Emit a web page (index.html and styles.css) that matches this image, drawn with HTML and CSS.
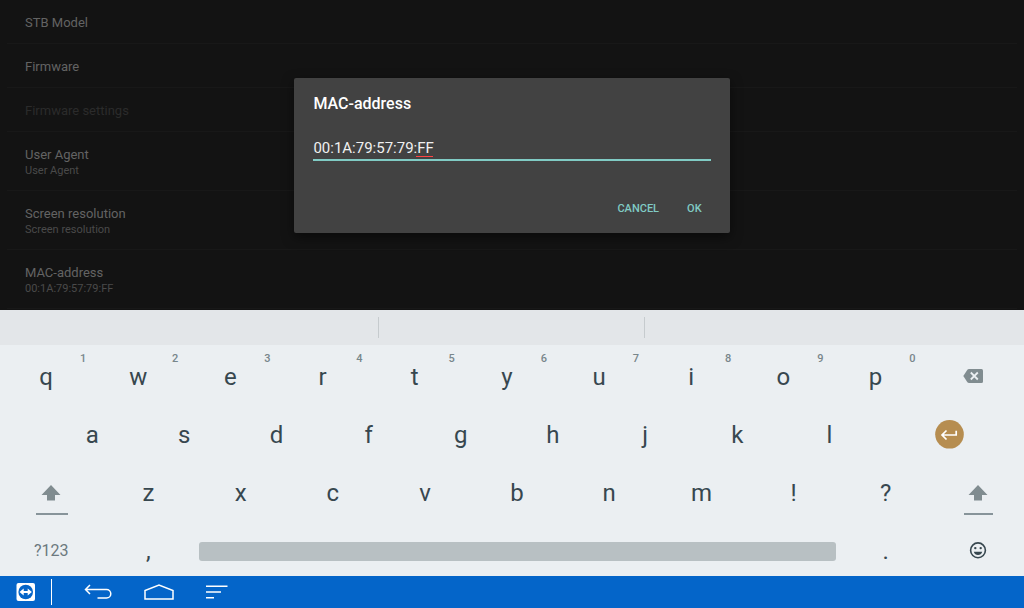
FILE: index.html
```html
<!DOCTYPE html>
<html lang="en">
<head>
  <meta charset="UTF-8">
  <meta name="viewport" content="width=device-width, initial-scale=1.0">
  <title>MAC-address</title>
  <link rel="stylesheet" href="styles.css">
</head>
<body>
  <main class="settings">
    <ul class="settings-list">
      <li><span class="name">STB Model</span></li>
      <li><span class="name">Firmware</span></li>
      <li class="disabled"><span class="name">Firmware settings</span></li>
      <li><span class="name">User Agent</span><span class="value">User Agent</span></li>
      <li><span class="name">Screen resolution</span><span class="value">Screen resolution</span></li>
      <li><span class="name">MAC-address</span><span class="value">00:1A:79:57:79:FF</span></li>
    </ul>

    <div class="overlay">
      <form class="dialog" role="dialog" aria-labelledby="macLabel">
        <label id="macLabel" for="mac">MAC-address</label>
        <div class="field">
          <input id="mac" type="text" value="00:1A:79:57:79:FF" spellcheck="false" autocomplete="off">
          <span class="typo"></span>
        </div>
        <div class="actions">
          <button type="button">CANCEL</button>
          <button type="button">OK</button>
        </div>
      </form>
    </div>
  </main>

  <div class="suggestions">
    <span></span>
    <span></span>
    <span></span>
  </div>

  <section class="keyboard" aria-label="Keyboard">
    <div class="row">
      <button class="key">q<sup>1</sup></button>
      <button class="key">w<sup>2</sup></button>
      <button class="key">e<sup>3</sup></button>
      <button class="key">r<sup>4</sup></button>
      <button class="key">t<sup>5</sup></button>
      <button class="key">y<sup>6</sup></button>
      <button class="key">u<sup>7</sup></button>
      <button class="key">i<sup>8</sup></button>
      <button class="key">o<sup>9</sup></button>
      <button class="key">p<sup>0</sup></button>
      <button class="key rest" aria-label="Backspace">
        <svg width="20" height="18" viewBox="0 0 20 18">
          <path d="M6 1h12.500q1.500 0 1.500 1.500v11q0 1.500-1.500 1.500H6q-1 0-1.600-.8L.3 8l4.100-6.200Q5 1 6 1z" fill="#808c90"/>
          <path d="M7.800 4.500l7 7M14.800 4.500l-7 7" stroke="#ebeff2" stroke-width="1.800"/>
        </svg>
      </button>
    </div>

    <div class="row indent">
      <button class="key">a</button>
      <button class="key">s</button>
      <button class="key">d</button>
      <button class="key">f</button>
      <button class="key">g</button>
      <button class="key">h</button>
      <button class="key">j</button>
      <button class="key">k</button>
      <button class="key">l</button>
      <button class="key rest" aria-label="Enter">
        <svg width="30" height="30" viewBox="0 0 30 30">
          <circle cx="14.500" cy="14.300" r="14.300" fill="#b68d50"/>
          <path d="M21.200 10.800v4.200H7.500M11.500 10.500l-4.500 4.500 4.500 4.500" fill="none" stroke="#fff" stroke-width="1.700"/>
        </svg>
      </button>
    </div>

    <div class="row">
      <button class="key wide shift" aria-label="Shift">
        <svg width="20" height="16" viewBox="0 0 20 16">
          <path d="M10 0l9.500 10H14v5.500H6V10H.5z" fill="#808c90"/>
        </svg>
      </button>
      <button class="key">z</button>
      <button class="key">x</button>
      <button class="key">c</button>
      <button class="key">v</button>
      <button class="key">b</button>
      <button class="key">n</button>
      <button class="key">m</button>
      <button class="key">!</button>
      <button class="key">?</button>
      <button class="key rest shift" aria-label="Shift">
        <svg width="20" height="16" viewBox="0 0 20 16">
          <path d="M10 0l9.500 10H14v5.500H6V10H.5z" fill="#808c90"/>
        </svg>
      </button>
    </div>

    <div class="row last">
      <button class="key wide symbols">?123</button>
      <button class="key">,</button>
      <button class="key space" aria-label="Space"></button>
      <button class="key">.</button>
      <button class="key rest" aria-label="Emoji">
        <svg width="18" height="20" viewBox="0 0 18 20">
          <circle cx="9" cy="9.300" r="7.400" fill="none" stroke="#37474f" stroke-width="1.600"/>
          <circle cx="6.300" cy="7.100" r="1.200" fill="#37474f"/>
          <circle cx="11.700" cy="7.100" r="1.200" fill="#37474f"/>
          <path d="M4.800 10.700h8.400Q12.200 14 9 14T4.800 10.700z" fill="#37474f"/>
        </svg>
      </button>
    </div>
  </section>

  <nav class="navbar">
    <button class="viewer" aria-label="Remote control">
      <svg width="20" height="20" viewBox="0 0 20 20">
        <rect x=".5" y="1" width="18.500" height="18" rx="2" fill="#fff"/>
        <circle cx="9.700" cy="10" r="7.300" fill="#0465c9"/>
        <path d="M3.500 10l4.200-3.400v2.300h4V6.600l4.200 3.400-4.200 3.400v-2.300h-4v2.300z" fill="#fff"/>
      </svg>
    </button>
    <button aria-label="Back">
      <svg width="28" height="16" viewBox="0 0 28 16">
        <path d="M6 1L1.500 5.500 6 10M1.500 5.500h21a4.300 4.300 0 0 1 0 8.600h-9" fill="none" stroke="#fff" stroke-width="1.500"/>
      </svg>
    </button>
    <button aria-label="Home">
      <svg width="30" height="16" viewBox="0 0 30 16">
        <path d="M1 15V6.500L15 1l14 5.500V15z" fill="none" stroke="#fff" stroke-width="1.500"/>
      </svg>
    </button>
    <button aria-label="Recent apps">
      <svg width="22" height="14" viewBox="0 0 22 14">
        <path d="M0 1.200h21.500M0 7h15M0 12.800h8" fill="none" stroke="#fff" stroke-width="1.600"/>
      </svg>
    </button>
  </nav>
</body>
</html>
```
FILE: styles.css
```css
* {
  box-sizing: border-box;
}

html, body {
  height: 100%;
  margin: 0;
}

body {
  display: flex;
  flex-direction: column;
  overflow: hidden;
  background: #131313;
  font-family: Roboto, sans-serif;
}

button {
  margin: 0;
  padding: 0;
  border: 0;
  background: none;
  font-family: inherit;
  cursor: pointer;
}

svg {
  display: block;
}

/* settings behind the dialog */
.settings {
  position: relative;
  flex: 1;
  min-height: 0;
  overflow: hidden;
}

.settings-list {
  margin: 0;
  padding: 0 7px;
  list-style: none;
}

.settings-list li {
  display: flex;
  flex-direction: column;
  padding: 14px 18px 12px;
  border-bottom: 1px solid #181818;
}

.name {
  color: #636363;
  font-size: 13px;
  line-height: 17px;
}

.value {
  color: #4a4a4a;
  font-size: 11px;
  line-height: 15px;
}

.disabled .name {
  color: #2b2b2b;
}

/* dialog */
.overlay {
  position: absolute;
  top: 0;
  left: 0;
  width: 100%;
  height: 100%;
  display: flex;
  justify-content: center;
  align-items: center;
}

.dialog {
  width: 42.5%;
  padding: 16px 19px 9px;
  border-radius: 2px;
  background: #424242;
  box-shadow: 0 4px 12px rgba(0, 0, 0, 0.5);
}

.dialog label {
  display: block;
  color: #fff;
  font-size: 16px;
  font-weight: 500;
  line-height: 20px;
}

.field {
  position: relative;
  margin-top: 24px;
}

.field input {
  display: block;
  width: 100%;
  height: 23px;
  padding: 0;
  border: 0;
  border-bottom: 2px solid #80cbc4;
  outline: none;
  background: none;
  color: #f0f0f0;
  font-family: inherit;
  font-size: 15px;
}

.typo {
  position: absolute;
  left: 103px;
  bottom: 4px;
  width: 17px;
  height: 1px;
  background: #f44;
}

.actions {
  display: flex;
  justify-content: flex-end;
  gap: 28px;
  margin-top: 33px;
  padding-right: 9px;
}

.actions button {
  height: 30px;
  color: #80cbc4;
  font-size: 11px;
  font-weight: 500;
}

/* keyboard */
.suggestions {
  display: flex;
  align-items: center;
  height: 35px;
  background: #e3e6e9;
}

.suggestions span {
  width: 26%;
  height: 21px;
  border-right: 1px solid #c6cbce;
}

.suggestions span:first-child,
.suggestions span:last-child {
  width: 37%;
}

.suggestions span:last-child {
  border: 0;
}

.keyboard {
  padding-top: 3px;
  background: #ebeff2;
}

.row {
  display: flex;
  height: 58px;
}

.row.indent {
  padding-left: 4.5%;
}

.row.last {
  height: 54px;
  padding-top: 4px;
}

.key {
  position: relative;
  display: flex;
  flex: none;
  justify-content: center;
  align-items: center;
  width: 9%;
  color: #37474f;
  font-size: 24px;
  line-height: 28px;
}

/* the indent shrinks the row, so these keys are sized from the window */
.row.indent .key {
  width: 9vw;
}

.key sup {
  position: absolute;
  top: 4px;
  right: 6px;
  color: #78868b;
  font-size: 11px;
  font-weight: 500;
  line-height: 14px;
}

.key.wide {
  width: 10%;
}

.key.rest,
.row.indent .key.rest {
  flex: 1;
  width: auto;
}

.shift::after {
  content: "";
  position: absolute;
  bottom: 7px;
  left: 35%;
  right: 34%;
  height: 2px;
  background: #87949a;
}

.key.symbols {
  color: #6c797f;
  font-size: 16px;
}

.key.space {
  width: 63%;
  padding: 0 4px;
}

.key.space::before {
  content: "";
  width: 100%;
  height: 19px;
  border-radius: 3px;
  background: #b8c0c3;
}

/* system bar */
.navbar {
  display: flex;
  align-items: center;
  gap: 32px;
  height: 32px;
  padding-left: 16px;
  background: #0465c9;
}

.viewer {
  display: flex;
  align-items: center;
  width: 36px;
  height: 26px;
  border-right: 1px solid #fff;
}
```
